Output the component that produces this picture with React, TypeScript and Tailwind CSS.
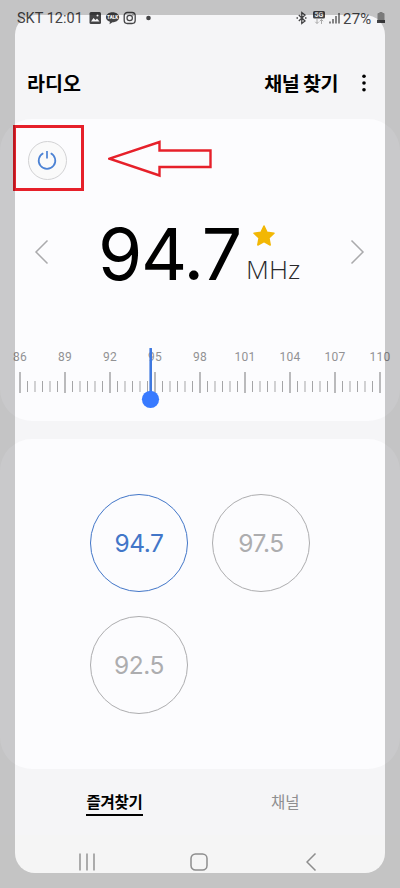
import React, { useState } from "react";

const labels = [86, 89, 92, 95, 98, 101, 104, 107, 110];
const favorites = ["94.7", "97.5", "92.5"];

const StatusBar: React.FC = () => (
  <div className="flex h-9 items-center pl-[17px] pr-[15px] text-[#444446]">
    <span className="w-[72px] whitespace-nowrap pt-[2px] text-[14.5px] leading-9 font-['Roboto',sans-serif]">SKT 12:01</span>
    <svg width="65" height="14" viewBox="0 0 65 14" fill="none">
      <rect x="0.5" y="1" width="11.5" height="12" rx="1.5" fill="#444446" />
      <path d="M2 10.5 4.5 7l2 2 1.5-1.5 2.5 3z" fill="#f5f5f7" />
      <circle cx="8.5" cy="4.5" r="1" fill="#f5f5f7" />
      <path d="M23.5 1.2c3.8 0 6.7 2.2 6.7 5s-2.9 5-6.7 5l-3 2.1.4-2.5c-2.4-.8-4-2.5-4-4.6 0-2.8 2.9-5 6.6-5z" fill="#444446" />
      <text x="23.6" y="8" textAnchor="middle" fontSize="4.5" fontWeight="900" fontFamily="Roboto, sans-serif" fill="#f5f5f7">TALK</text>
      <rect x="35.2" y="1.5" width="11" height="11" rx="3.2" stroke="#444446" strokeWidth="1.3" />
      <circle cx="40.7" cy="7" r="2.7" stroke="#444446" strokeWidth="1.2" />
      <circle cx="44" cy="3.9" r="0.7" fill="#444446" />
      <circle cx="59.5" cy="7" r="2.3" fill="#444446" />
    </svg>
    <svg className="ml-auto" width="48" height="16" viewBox="0 0 48 16" fill="none">
      <path d="m2.8 5 6.2 6-3.2 2.500v-11L9 5l-6.200 6M.5 8H2M9 8h1.500" stroke="#444446" strokeWidth="1.3" />
      <rect x="17" y="1" width="12" height="7.5" rx="1.5" fill="#444446" />
      <text x="23" y="7.2" textAnchor="middle" fontSize="7" fontWeight="700" fontFamily="Roboto, sans-serif" fill="#f5f5f7">5G</text>
      <path d="M21 9v4.5m-1.700-1.700 1.700 1.700 1.700-1.700M25.500 14V9.500m-1.700 1.700 1.700-1.700 1.700 1.700" stroke="#aaa" />
      <path d="M34 11.5v2M37 9v4.5M40 6v7.5M43 3v10.5" stroke="#555" strokeWidth="1.4" />
    </svg>
    <span className="w-[31px] whitespace-nowrap pt-[2px] text-[15px] leading-9 tracking-[0.2px] -ml-[1px] font-['Roboto',sans-serif]">27%</span>
    <svg className="ml-[2px]" width="9" height="14" viewBox="0 0 9 14">
      <path d="M2.5 2h1V1h3v1h1a1 1 0 0 1 1 1v6h-7V3a1 1 0 0 1 1-1z" fill="#999" />
      <path d="M1 9h8v3H1z" fill="#444446" />
    </svg>
  </div>
);

const Ruler: React.FC = () => (
  <div className="relative mt-[59px]">
    <div className="-ml-[2.5px] flex w-[405px] text-center text-[12px] leading-[18px] tracking-[0.2px] text-[#929294] font-['Roboto',sans-serif]">
      {labels.map((n) => (
        <span key={n} className="w-[45px]">{n}</span>
      ))}
    </div>
    <svg className="mt-[6px] block" width="400" height="22" viewBox="0 0 400 22">
      {Array.from({ length: 49 }, (_, i) => {
        const x = 20 + i * 7.5;
        return i % 6 === 0 ? (
          <line key={i} x1={x} x2={x} y1="0" y2="21" stroke="#bababc" strokeWidth="2" />
        ) : (
          <line key={i} x1={x} x2={x} y1="9" y2="20" stroke="#a5a5a7" strokeWidth="1" />
        );
      })}
    </svg>
    {/* Needle */}
    <svg className="absolute left-[141px] top-0" width="19" height="62" viewBox="0 0 19 62">
      <path d="M9.7 .8v50" stroke="#3f78df" strokeWidth="2.6" strokeLinecap="round" />
      <circle cx="9.5" cy="51.300" r="8.600" fill="#387aff" />
    </svg>
  </div>
);

const App: React.FC = () => {
  const [selected, setSelected] = useState("94.7");

  return (
    <div className="relative h-[888px] w-[400px] overflow-hidden bg-[#f5f5f7] font-['Inter','Noto_Sans_CJK_KR',sans-serif]">
      <StatusBar />

      {/* Header */}
      <header className="flex h-[83px] items-center pl-[27px] pr-[31px] pt-[11px] text-black font-['Noto_Sans_CJK_KR',sans-serif]">
        <h1 className="text-[19.5px] font-bold leading-7">라디오</h1>
        <button className="ml-auto text-[19.5px] font-bold leading-7 tracking-[-0.5px]">채널 찾기</button>
        <svg className="ml-[21px]" width="10" height="20" viewBox="0 0 10 20">
          <circle cx="5" cy="3.2" r="1.8" />
          <circle cx="5" cy="10" r="1.8" />
          <circle cx="5" cy="16.8" r="1.8" />
        </svg>
      </header>

      {/* Tuner */}
      <section className="h-[302px] rounded-[32px] bg-[#fcfcfe] pt-[6px]">
        <div className="flex items-center">
          <div className="ml-[13px] flex h-[66px] w-[71px] items-center justify-center border-[3px] border-[#e6202a] pr-[3px] pt-[4px]">
            <button className="flex size-[39px] items-center justify-center rounded-full border border-[#d2d2d4] bg-[#fafafa]">
              <svg width="20" height="22" viewBox="0 0 20 22" fill="none" stroke="#4c82d4" strokeWidth="1.7">
                <path d="M6.300 4.200a8.300 8.300 0 1 0 7.400 0M10 2v7.500" />
              </svg>
            </button>
          </div>
          <svg className="ml-[24px] mt-[2px]" width="106" height="40" viewBox="0 0 106 40" fill="none">
            <path d="M1.500 19.700 51.500 3v8.500h51V28h-51v8.500z" stroke="#e6202a" strokeWidth="2.400" />
          </svg>
        </div>

        <div className="mt-[24px] flex h-[74px] items-center">
          <svg className="ml-[34px]" width="16" height="26" viewBox="0 0 16 26" fill="none" stroke="#aaaaac" strokeWidth="1.5">
            <path d="M13.500 1.500 2 13l11.500 11.500" />
          </svg>
          <div className="ml-[48px] w-[148px] whitespace-nowrap pt-[4px] text-[71.5px] leading-[74px] tracking-[-1.3px] text-black">94.7</div>
          <div className="flex w-[58px] flex-col pt-[4px]">
            <svg className="ml-[6px]" width="24" height="24" viewBox="0 0 24 24" fill="#f2b705" stroke="#f2b705" strokeWidth="1.5" strokeLinejoin="round">
              <path d="m12 2 3 6.300 7 .9-5.100 4.800 1.300 7L12 17.500 5.800 21l1.300-7L2 9.200l7-.9z" />
            </svg>
            <span className="mt-[5px] text-[26.5px] font-light leading-8 text-[#29292b] font-['Open_Sans',sans-serif]">MHz</span>
          </div>
          <svg className="ml-[45px]" width="16" height="26" viewBox="0 0 16 26" fill="none" stroke="#aaaaac" strokeWidth="1.5">
            <path d="M2.500 1.500 14 13 2.500 24.500" />
          </svg>
        </div>
        <Ruler />
      </section>

      {/* Favorites */}
      <section className="mt-[18px] h-[330px] rounded-[32px] bg-[#fcfcfe] pl-[90px] pt-[55px]">
        <div className="flex w-[230px] flex-wrap gap-x-[24px] gap-y-[24px]">
          {favorites.map((f) => (
            <button
              key={f}
              onClick={() => setSelected(f)}
              className={`size-[98px] rounded-full border pt-[1px] text-[24.5px] tracking-[-0.4px] ${
                selected === f ? "border-[#4276c8] text-[#4276c8]" : "border-[#adadaf] text-[#adadaf]"
              }`}
            >
              {f}
            </button>
          ))}
        </div>
      </section>

      {/* Tabs */}
      <nav className="flex h-[66px] pt-[18px] text-[15.5px] leading-7 font-['Noto_Sans_CJK_KR',sans-serif]">
        <button className="ml-[86px] h-[29px] w-[57px] whitespace-nowrap border-b-2 border-black font-bold tracking-[-0.2px] text-black">즐겨찾기</button>
        <button className="ml-[128px] h-[28px] whitespace-nowrap text-[#8e8e90]">채널</button>
      </nav>

      {/* System navigation */}
      <footer className="flex h-[53px] items-start bg-[#f5f5f5] pt-[18px]">
        <svg className="ml-[78px]" width="18" height="18" viewBox="0 0 18 18" stroke="#9a9a9a" strokeWidth="1.6">
          <path d="M2 .5v17M9 .5v17M16 .5v17" />
        </svg>
        <svg className="ml-[94px]" width="18" height="18" viewBox="0 0 18 18" fill="none" stroke="#8d8d8d" strokeWidth="1.5">
          <rect x="1" y="1" width="16" height="16" rx="4.5" />
        </svg>
        <svg className="ml-[98px]" width="12" height="18" viewBox="0 0 12 18" fill="none" stroke="#8d8d8d" strokeWidth="1.5">
          <path d="M9.500.500 1 9l8.500 8.500" />
        </svg>
      </footer>

      {/* Dimmed frame around the rounded window */}
      <div className="pointer-events-none absolute bottom-[15px] left-[15px] right-[15px] top-[15px] rounded-[20px] shadow-[0_0_0_40px_rgba(0,0,0,0.2)]" />
    </div>
  );
};

export default App;
